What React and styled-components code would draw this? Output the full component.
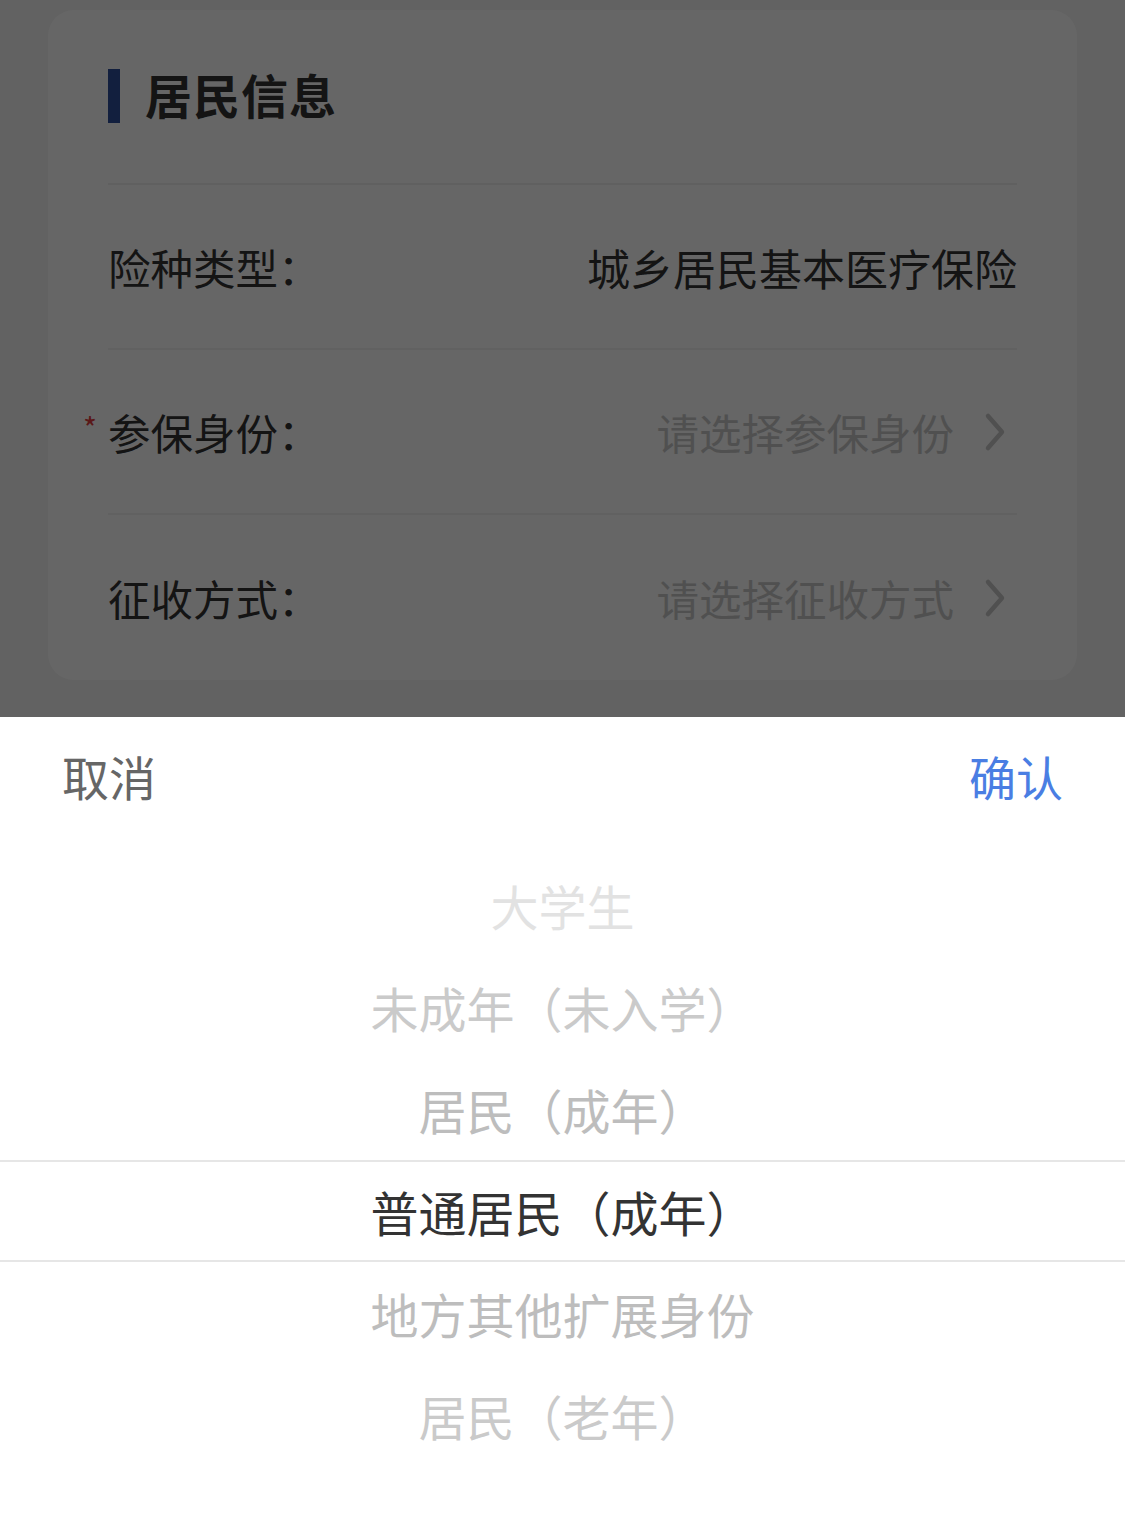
import React from "react";
import styled, { createGlobalStyle } from "styled-components";

const Global = createGlobalStyle`
  html, body { margin: 0; padding: 0; }
  body {
    background: #f5f5f5;
    font-family: "Noto Sans CJK SC", "Noto Sans", sans-serif;
    width: 1125px;
    height: 1517px;
    overflow: hidden;
  }
`;

const Page = styled.div`
  padding: 10px 48px 0;
  box-sizing: border-box;
  width: 1125px;
  height: 1517px;
`;

const Card = styled.section`
  background: #ffffff;
  border-radius: 26px;
  padding: 0 60px;
`;

const TitleRow = styled.div`
  height: 175px;
  display: flex;
  align-items: center;
  gap: 25px;
  border-bottom: 2px solid #f0f0f0;
  box-sizing: border-box;
`;

const TitleBar = styled.span`
  width: 12px;
  height: 54px;
  background: #2d4f9c;
  display: block;
  margin-top: -2px;
`;

const Title = styled.h2`
  margin: -7px 0 0;
  font-size: 47px;
  font-weight: 700;
  color: #333333;
  letter-spacing: 1px;
`;

const Row = styled.div`
  height: 165px;
  display: flex;
  align-items: center;
  justify-content: space-between;
  box-sizing: border-box;
  border-bottom: ${(p) => (p.$last ? "none" : "2px solid #f2f2f2")};
`;

const Label = styled.span`
  position: relative;
  font-size: 42.5px;
  color: #333333;
`;

const Star = styled.span`
  position: absolute;
  left: -25px;
  top: 4px;
  font-size: 30px;
  color: #e23c3c;
`;

const Value = styled.span`
  display: flex;
  align-items: center;
  font-size: ${(p) => (p.$placeholder ? "42.5px" : "43px")};
  color: ${(p) => (p.$placeholder ? "#c8c8c8" : "#333333")};
`;

const Chevron = styled.svg`
  width: 22px;
  height: 40px;
  margin-left: 30px;
  margin-right: 11px;
  display: block;
`;

const Overlay = styled.div`
  position: fixed;
  inset: 0;
  background: rgba(0, 0, 0, 0.6);
`;

const Sheet = styled.div`
  position: fixed;
  left: 0;
  right: 0;
  bottom: 0;
  height: 800px;
  background: #ffffff;
  display: flex;
  flex-direction: column;
`;

const SheetHeader = styled.div`
  height: 116px;
  display: flex;
  align-items: center;
  justify-content: space-between;
  padding: 0 62px;
`;

const HeaderButton = styled.span`
  font-size: 47px;
  color: ${(p) => (p.$primary ? "#4a7ee3" : "#666666")};
`;

const Picker = styled.div`
  padding-top: 21px;
  display: flex;
  flex-direction: column;
`;

const Item = styled.div`
  height: 102px;
  display: flex;
  align-items: center;
  justify-content: center;
  font-size: 48px;
  color: ${(p) => p.$color};
  box-sizing: border-box;
  border-top: ${(p) => (p.$selected ? "2px solid #e6e6e6" : "none")};
  border-bottom: ${(p) => (p.$selected ? "2px solid #e6e6e6" : "none")};
`;

const rows = [
  { label: "险种类型：", value: "城乡居民基本医疗保险" },
  { label: "参保身份：", value: "请选择参保身份", required: true, placeholder: true },
  { label: "征收方式：", value: "请选择征收方式", placeholder: true },
];

const items = [
  { text: "大学生", color: "#e2e2e2" },
  { text: "未成年（未入学）", color: "#cacaca" },
  { text: "居民（成年）", color: "#bdbdbd" },
  { text: "普通居民（成年）", color: "#333333", selected: true },
  { text: "地方其他扩展身份", color: "#bdbdbd" },
  { text: "居民（老年）", color: "#cacaca" },
];

export default function App() {
  return (
    <>
      <Global />
      <Page>
        <Card>
          <TitleRow>
            <TitleBar />
            <Title>居民信息</Title>
          </TitleRow>
          {rows.map((r, i) => (
            <Row key={r.label} $last={i === rows.length - 1}>
              <Label>
                {r.required && <Star>*</Star>}
                {r.label}
              </Label>
              <Value $placeholder={r.placeholder}>
                {r.value}
                {r.placeholder && (
                  <Chevron viewBox="0 0 22 40">
                    <polyline
                      points="4,4 18,20 4,36"
                      fill="none"
                      stroke="#c8c8c8"
                      strokeWidth="4.5"
                      strokeLinecap="round"
                      strokeLinejoin="round"
                    />
                  </Chevron>
                )}
              </Value>
            </Row>
          ))}
        </Card>
      </Page>
      <Overlay />
      <Sheet>
        <SheetHeader>
          <HeaderButton>取消</HeaderButton>
          <HeaderButton $primary>确认</HeaderButton>
        </SheetHeader>
        <Picker>
          {items.map((it) => (
            <Item key={it.text} $color={it.color} $selected={it.selected}>
              {it.text}
            </Item>
          ))}
        </Picker>
      </Sheet>
    </>
  );
}
